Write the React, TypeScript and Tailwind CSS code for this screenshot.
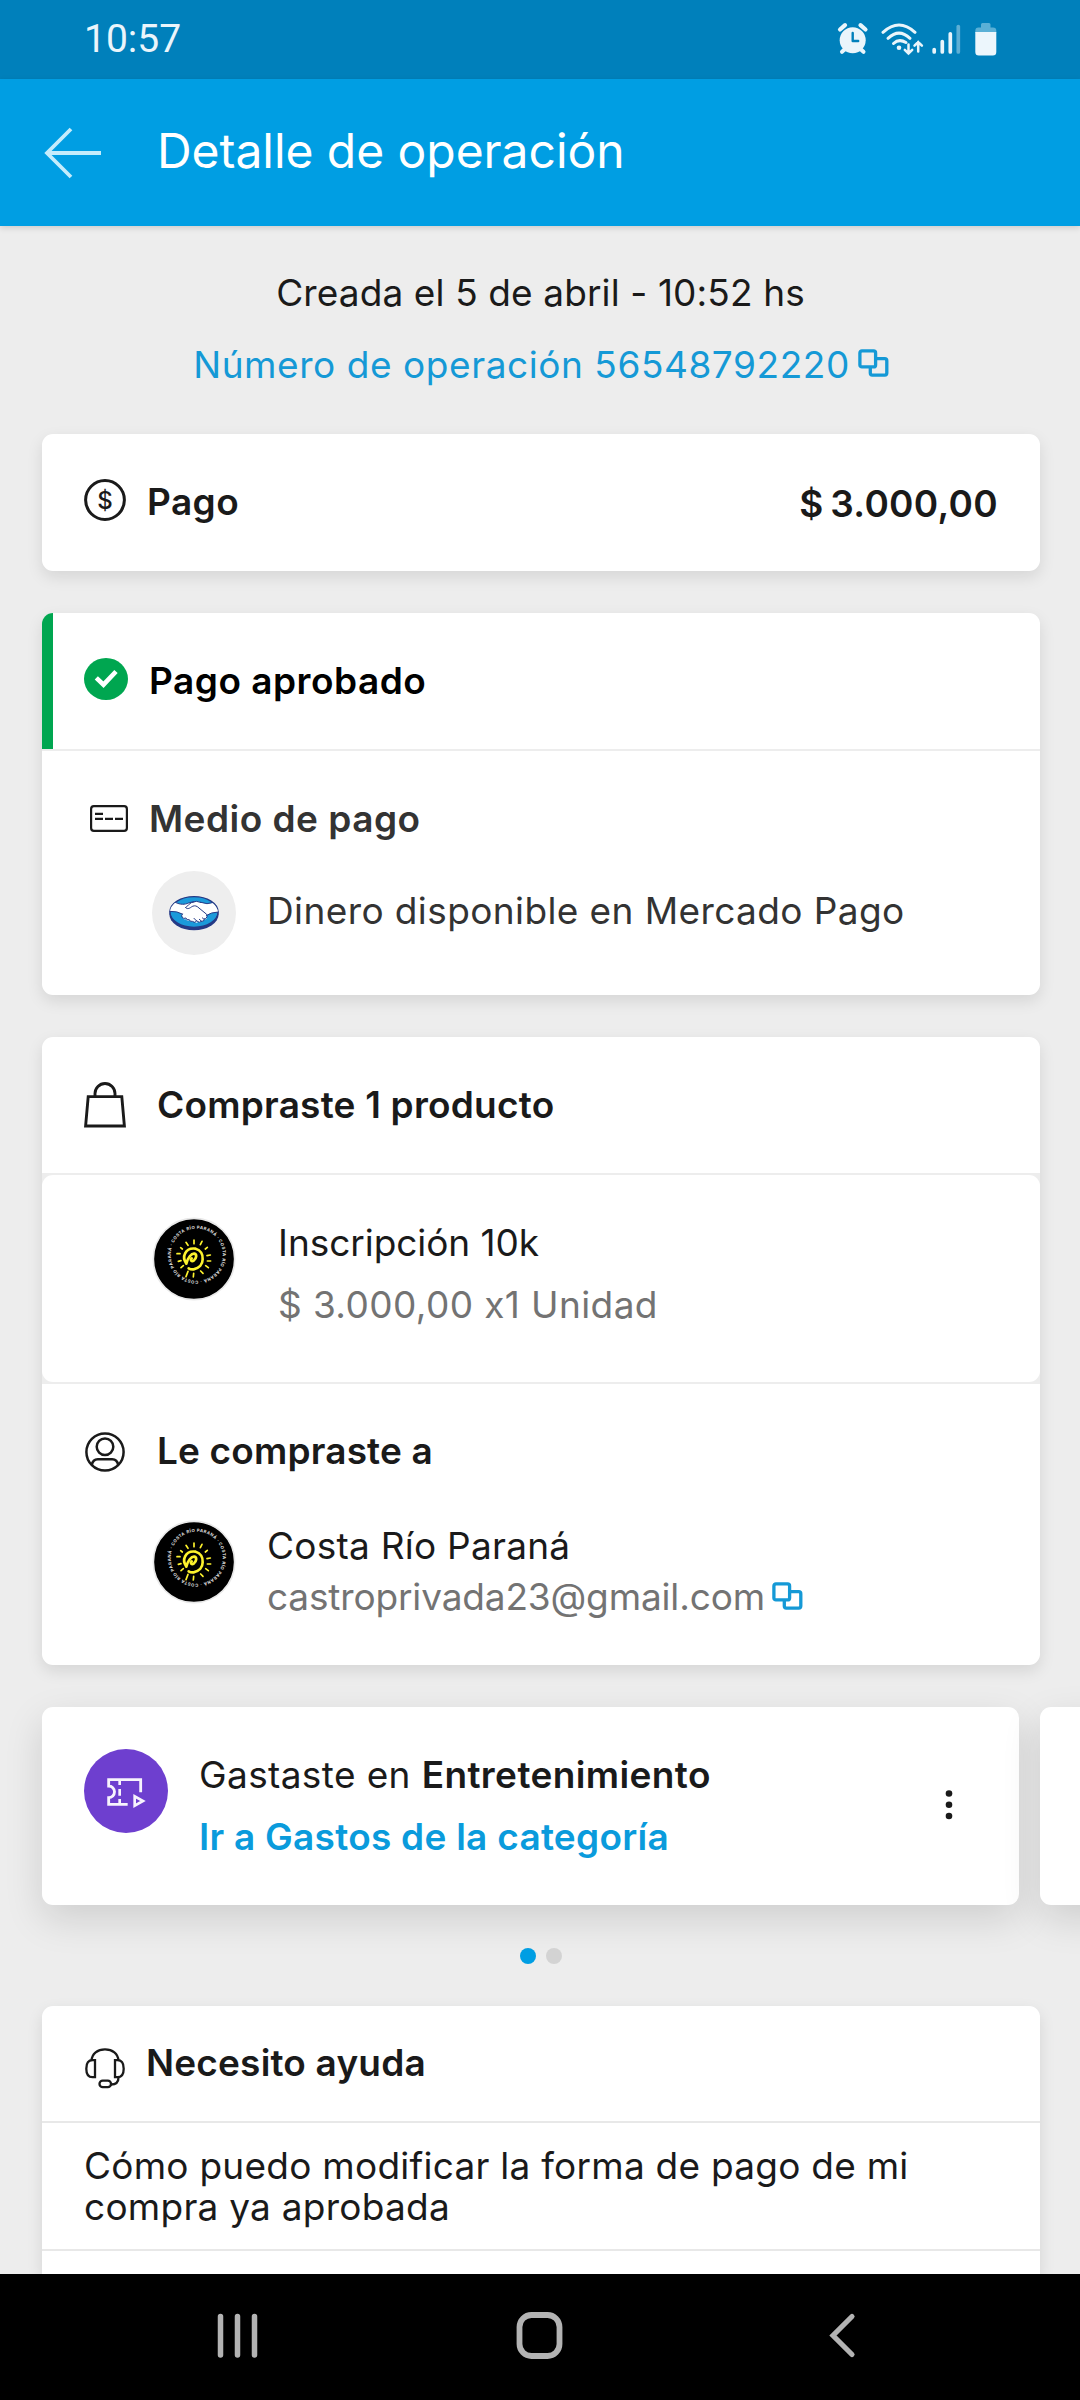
import type { ReactNode } from 'react';

function Card({ className, children }: { className: string; children?: ReactNode }) {
  return (
    <section
      className={`ml-[42px] w-[998px] shrink-0 overflow-hidden rounded-[11px] bg-white shadow-[0_6px_16px_rgba(0,0,0,0.1)] ${className}`}
    >
      {children}
    </section>
  );
}

function StatusIcons() {
  return (
    <svg className="h-[40px] w-[170px]" viewBox="0 0 170 40" fill="none" strokeLinecap="round">
      {/* alarm */}
      <g stroke="#eaf5fb">
        <circle cx="15.7" cy="24.300" r="13" fill="#eaf5fb" stroke="none" />
        <path d="M3 13.500 8 9.200M28.500 13.500l-5-4.300" strokeWidth="4.2" />
        <path d="M7.5 33.500 5 35.800M24 33.500l2.500 2.300" strokeWidth="4" />
        <path d="M15.700 17v8h5.500" stroke="#0080bb" strokeWidth="2.4" strokeLinejoin="round" />
      </g>
      {/* wifi */}
      <g stroke="#eaf5fb" strokeWidth="3">
        <path d="M46 16.300Q62 1.800 78 16.300" />
        <path d="M51 22.300Q62 12 73 22.300" />
        <path d="M56.500 27.500Q62 22.300 69 26.500" />
        <circle cx="62" cy="31.800" r="2.300" fill="#eaf5fb" stroke="none" />
        <path d="M71.500 28.500v9m-3.700-3.700 3.700 3.700 3.700-3.700M81.200 35.500v-9.500m-3.700 3.700 3.700-3.700 3.700 3.700" strokeWidth="2.500" />
      </g>
      {/* signal */}
      <g stroke="#eaf5fb" strokeWidth="3.700">
        <path d="M97.200 33.500v2.500M105.300 25.500v10.500M113.300 17.800v18.200" />
        <path d="M121.300 10.500v25.500" opacity=".4" />
      </g>
      {/* battery */}
      <path d="M145.500 7h6.500a1.500 1.500 0 0 1 1.500 1.500V11.500h2.500a3.300 3.300 0 0 1 3.300 3.300V17h-21v-2.200A3.300 3.300 0 0 1 141.500 11.500h2.500V8.500A1.500 1.500 0 0 1 145.500 7Z" fill="#5ab0d6" />
      <path d="M138.300 16h21v20a3.500 3.500 0 0 1-3.500 3.500h-14a3.500 3.500 0 0 1-3.500-3.500Z" fill="#ecf6fc" />
    </svg>
  );
}

function CopyIcon({ className }: { className: string }) {
  return (
    <svg className={`h-[28px] w-[31px] shrink-0 ${className}`} viewBox="0 0 31 28" fill="none" stroke="#1599d6" strokeWidth="3.300">
      <rect x="1.900" y="1.900" width="15.700" height="16" rx="2" />
      <path d="M18 9.700h8.800a2 2 0 0 1 2 2v12.400a2 2 0 0 1-2 2H14.300a2 2 0 0 1-2-2V18.500" />
    </svg>
  );
}

function DollarIcon() {
  return (
    <svg className="h-[42px] w-[42px]" viewBox="0 0 42 42" fill="none">
      <circle cx="21" cy="21" r="19.400" stroke="#1a1a1a" strokeWidth="3" />
      <text x="21" y="29.700" textAnchor="middle" fontFamily="Inter, sans-serif" fontWeight="500" fontSize="24" fill="#1a1a1a">
        $
      </text>
    </svg>
  );
}

function CheckIcon() {
  return (
    <svg className="h-[42px] w-[44px]" viewBox="0 0 44 42" fill="none">
      <ellipse cx="22" cy="21" rx="22" ry="21" fill="#00a650" />
      <path d="m12.300 19.800 7.200 6.900L32 13.500" stroke="#fff" strokeWidth="4.600" />
    </svg>
  );
}

function CardIcon() {
  return (
    <svg className="h-[27px] w-[38px]" viewBox="0 0 38 27" fill="none" stroke="#1a1a1a">
      <rect x="1.100" y="1.100" width="35.800" height="24.800" rx="2.800" strokeWidth="2.200" />
      <path d="M5 8.800h8M5 13.800h8M15 13.800h8M25 13.800h8" strokeWidth="2.200" />
    </svg>
  );
}

function HandshakeLogo() {
  return (
    <span className="flex h-[84px] w-[84px] items-center justify-center rounded-full bg-[#eeeeee]">
      <svg className="h-[36px] w-[52px]" viewBox="0 0 156 108" strokeLinejoin="round" strokeLinecap="round">
        <ellipse cx="78" cy="57" rx="74" ry="49" fill="#253a86" />
        <ellipse cx="78" cy="51" rx="72" ry="46" fill="#1b9ada" stroke="#253a86" strokeWidth="4" />
        <path
          d="M23 22C38 29 50 29 62 24Q68 22 74 21L82 20Q90 18 98 22 116 29 133 23Q149 36 150 51 128 52 116 61L117 68Q116 74 109 73 108 80 101 79 96 84 91 80 85 86 80 80L73 80Q66 81 65 76 56 79 54 73 44 74 44 66 38 60 43 57 28 48 6 49 8 34 23 22Z"
          fill="#fff"
        />
        <path
          d="M22 22C38 30 50 29 62 24Q70 21 78 20M6 49Q28 48 43 57M98 22Q118 30 134 23M150 51Q128 52 116 61M53 38C56 43 64 41 70 36 76 32 82 31 88 35L116 58Q120 66 113 71 107 74 103 69M53 38Q62 28 70 23 86 15 98 22M109 73Q108 80 101 79L94 73M101 79Q94 86 86 78M43 57Q38 63 43 68 47 72 54 69 55 77 64 74 66 81 73 79 80 86 86 78L78 70"
          fill="none"
          stroke="#253a86"
          strokeWidth="3"
        />
      </svg>
    </span>
  );
}

function SunLogo({ id }: { id: string }) {
  return (
    <svg className="h-[84px] w-[84px] shrink-0" viewBox="-126 -126 252 252" fill="none" strokeLinecap="round">
      <defs>
        <path id={id} d="M-61.400 -47.900A78 78 0 1 1 -61.500 -47.700" />
      </defs>
      <circle r="122" fill="#000" stroke="#e9e9e9" strokeWidth="5" />
      <text fontFamily="Inter, sans-serif" fontWeight="700" fontSize="12.500" fill="#e6e6e6">
        <textPath href={`#${id}`} textLength="484">
          COSTA RÍO PARANÁ · COSTA RÍO PARANÁ · COSTA RÍO PARANÁ ·
        </textPath>
      </text>
      <path
        d="M-23 14C-30 4 -31 -8 -27 -16 -21 -29 -8 -33 5 -31 20 -27 27 -13 26 1 26 17 15 28 -1 31Q-10 32 -16 28M-23 14C-20 -2 -8 -17 1 -16 10 -14 7 -2 0 4 -7 9 -12 4 -7 -2"
        stroke="#fdf22d"
        strokeWidth="8"
        strokeLinejoin="round"
      />
      <path
        d="M0 -57V-46M24 -53 19 -43M-24 -50-18 -41M40 -35 34 -30M-40 -34-35 -30M49 -12 39 -10M-51 -16H-42M40 6H50M-47 7-39 5M35 20 43 26M-39 26-32 20M20 36 27 43M-18 37-24 53M-1 43-2 54"
        stroke="#fdf22d"
        strokeWidth="5"
      />
    </svg>
  );
}

function BagIcon() {
  return (
    <svg className="h-[46px] w-[42px]" viewBox="0 0 42 46" fill="none" stroke="#1a1a1a" strokeWidth="2.900">
      <path d="M4.200 14.600h33.600l2.600 29.400H1.600ZM11 14.500V11.500a10 10 0 0 1 20 0v3" />
    </svg>
  );
}

function UserIcon() {
  return (
    <svg className="h-[40px] w-[40px]" viewBox="0 0 40 40" fill="none" stroke="#1a1a1a" strokeWidth="2.500">
      <circle cx="20" cy="20" r="18.600" />
      <circle cx="20" cy="14.800" r="8.300" />
      <path d="M6.800 33c.7-4 2.500-5.700 6-5.700h14.400c3.500 0 5.300 1.700 6 5.700" />
    </svg>
  );
}

function TicketIcon() {
  return (
    <svg className="h-[84px] w-[84px] shrink-0" viewBox="0 0 252 252" fill="none" stroke="#f7f3fd" strokeWidth="8.500">
      <circle cx="126" cy="126" r="126" fill="#6e3fcf" stroke="none" />
      <path d="M170 130V92H74V111A17 17 0 0 1 74 146V166H131" />
      <path d="M107 94v14M107 120v20M107 150v14" strokeWidth="8" />
      <path d="M152 142v28l25-14Z" strokeWidth="8" />
    </svg>
  );
}

function HeadsetIcon() {
  return (
    <svg className="h-[41px] w-[40px]" viewBox="0 0 40 41" fill="none" stroke="#1a1a1a" strokeWidth="2.300">
      <path d="M6.500 12.500C7 5.500 12.500 1.300 20 1.300S33 5.500 33.500 12.500" />
      <path d="M10 12.200v17H7.500c-4.400 0-6.200-3-6.200-8.500s1.800-8.500 6.200-8.500ZM30 12.200v17h2.500c4.400 0 6.200-3 6.200-8.500s-1.800-8.500-6.200-8.500Z" />
      <path d="M33.500 29.500c0 4.500-2.500 7-7.500 7" />
      <rect x="14.500" y="32.600" width="11.500" height="6.500" rx="3.200" />
    </svg>
  );
}

export default function App() {
  return (
    <div className="flex h-[2400px] w-[1080px] flex-col overflow-hidden bg-[#ededed] font-['Inter',sans-serif] text-[37px] leading-[40px] text-[#1a1a1a]">
      <div className="flex h-[79px] shrink-0 justify-between bg-[#0080bb] pl-[84px]">
        <span className="mt-[19px] font-['Roboto',sans-serif] text-[39px] text-[#eaf5fb]">10:57</span>
        <div className="mr-[73px] mt-[16px]">
          <StatusIcons />
        </div>
      </div>
      <header className="relative z-10 flex h-[147px] shrink-0 bg-[#009ee3] pl-[44px] shadow-[0_2px_6px_rgba(0,0,0,0.14)]">
        <svg className="mt-[48px] h-[52px] w-[58px]" viewBox="0 0 58 52" fill="none" stroke="#c4ecfc" strokeWidth="3.800">
          <path d="M57 26H3M27 2 3 26l24 24" />
        </svg>
        <h1 className="ml-[55px] mt-[44px] text-[48px] leading-[56px] tracking-[-0.050px] text-white">Detalle de operación</h1>
      </header>

      <p className="mt-[47px] pl-[1px] text-center tracking-[0.120px]">Creada el 5 de abril - 10:52 hs</p>
      <div className="mt-[32px] flex h-[40px] shrink-0 justify-center pl-[2px] text-[#1599d6]">
        <span className="tracking-[0.560px]">Número de operación 56548792220</span>
        <CopyIcon className="ml-[8px] mt-[4px]" />
      </div>

      <Card className="mt-[49px] flex h-[137px] justify-between px-[42px] font-semibold">
        <div className="flex">
          <div className="mt-[45px]">
            <DollarIcon />
          </div>
          <span className="ml-[21px] mt-[48px] tracking-[0.400px]">Pago</span>
        </div>
        <span className="mt-[50px] tracking-[0.300px] [word-spacing:-3px]">$ 3.000,00</span>
      </Card>

      <Card className="mt-[42px] flex h-[382px] flex-col">
        <div className="flex h-[136px] shrink-0 border-l-[11px] border-[#00a650] pl-[31px]">
          <div className="mt-[45px]">
            <CheckIcon />
          </div>
          <span className="ml-[21px] mt-[48px] font-semibold tracking-[0.500px] text-black">Pago aprobado</span>
        </div>
        <div className="h-[2px] shrink-0 bg-[#ededed]" />
        <div className="flex pl-[48px] text-[#333333]">
          <div className="mt-[54px]">
            <CardIcon />
          </div>
          <span className="ml-[21px] mt-[48px] font-semibold tracking-[0.480px]">Medio de pago</span>
        </div>
        <div className="mt-[32px] flex items-center pl-[110px] text-[#333333]">
          <HandshakeLogo />
          <span className="ml-[31px] -mt-[5px] tracking-[0.400px]">Dinero disponible en Mercado Pago</span>
        </div>
      </Card>

      <Card className="mt-[42px] flex h-[628px] flex-col">
        <div className="flex h-[136px] shrink-0 pl-[42px]">
          <div className="mt-[45px]">
            <BagIcon />
          </div>
          <span className="ml-[31px] mt-[48px] font-semibold tracking-[0.220px]">Compraste 1 producto</span>
        </div>
        <div className="shrink-0 bg-[#ededed] py-[2px]">
          <div className="flex h-[207px] rounded-[11px] bg-white pl-[110px] pt-[42px]">
            <SunLogo id="seal-product" />
            <div className="ml-[42px] mt-[6px] flex flex-col gap-[22px]">
              <span className="tracking-[-0.050px]">Inscripción 10k</span>
              <span className="tracking-[0.400px] text-[#737373]">$ 3.000,00 x1 Unidad</span>
            </div>
          </div>
        </div>
        <div className="flex pl-[43px]">
          <div className="mt-[48px]">
            <UserIcon />
          </div>
          <span className="ml-[32px] mt-[47px] font-semibold tracking-[0.160px]">Le compraste a</span>
        </div>
        <div className="mt-[48px] flex pl-[110px]">
          <SunLogo id="seal-seller" />
          <div className="ml-[31px] mt-[6px] flex flex-col gap-[11px]">
            <span className="tracking-[0.250px]">Costa Río Paraná</span>
            <div className="flex text-[#737373]">
              <span className="tracking-[-0.150px]">castroprivada23@gmail.com</span>
              <CopyIcon className="ml-[7px] mt-[5px]" />
            </div>
          </div>
        </div>
      </Card>

      <div className="mt-[42px] flex h-[198px] shrink-0 gap-[21px] pl-[42px]">
        <section className="flex w-[977px] shrink-0 rounded-[11px] bg-white pl-[42px] shadow-[0_14px_38px_rgba(0,0,0,0.13)]">
          <div className="mt-[42px]">
            <TicketIcon />
          </div>
          <div className="ml-[31px] mt-[48px] flex grow flex-col gap-[22px]">
            <span className="tracking-[0.380px]">
              Gastaste en <b className="font-semibold">Entretenimiento</b>
            </span>
            <a className="font-semibold tracking-[0.260px] text-[#0a9bdc]">Ir a Gastos de la categoría</a>
          </div>
          <svg className="mr-[60px] mt-[81px] h-[34px] w-[20px]" viewBox="0 0 20 34" fill="#1a1a1a">
            <circle cx="10" cy="5.500" r="3.300" />
            <circle cx="10" cy="16.800" r="3.300" />
            <circle cx="10" cy="28" r="3.300" />
          </svg>
        </section>
        <section className="w-[300px] shrink-0 rounded-[11px] bg-white shadow-[0_14px_38px_rgba(0,0,0,0.13)]" />
      </div>
      <div className="mt-[43px] flex h-[16px] shrink-0 justify-center gap-[10px] pl-[2px]">
        <span className="w-[16px] rounded-full bg-[#009ee3]" />
        <span className="w-[16px] rounded-full bg-[#d3d3d3]" />
      </div>

      <Card className="mt-[42px] flex h-[268px] flex-col rounded-b-none">
        <div className="flex h-[115px] shrink-0 pl-[43px]">
          <div className="mt-[42px]">
            <HeadsetIcon />
          </div>
          <span className="ml-[21px] mt-[37px] font-semibold tracking-[0.180px]">Necesito ayuda</span>
        </div>
        <p className="h-[130px] shrink-0 border-y-2 border-[#e8e8e8] pl-[42px] pt-[22px] leading-[41px] tracking-[0.250px]">
          Cómo puedo modificar la forma de pago de mi
          <br />
          compra ya aprobada
        </p>
      </Card>

      <nav className="relative z-10 h-[126px] shrink-0 bg-black pl-[210px]">
        <svg className="h-[126px] w-[660px]" viewBox="210 0 660 126" fill="none" stroke="#b3b3b3" strokeLinecap="round">
          <path d="M220.500 42.500v38.500M237.500 42.500v38.500M254.500 42.500v38.500" strokeWidth="5.500" />
          <rect x="519.500" y="41" width="40" height="41" rx="12" strokeWidth="5.800" />
          <path d="M852 42.500 833 61.500l19 19" strokeWidth="5.200" />
        </svg>
      </nav>
    </div>
  );
}
